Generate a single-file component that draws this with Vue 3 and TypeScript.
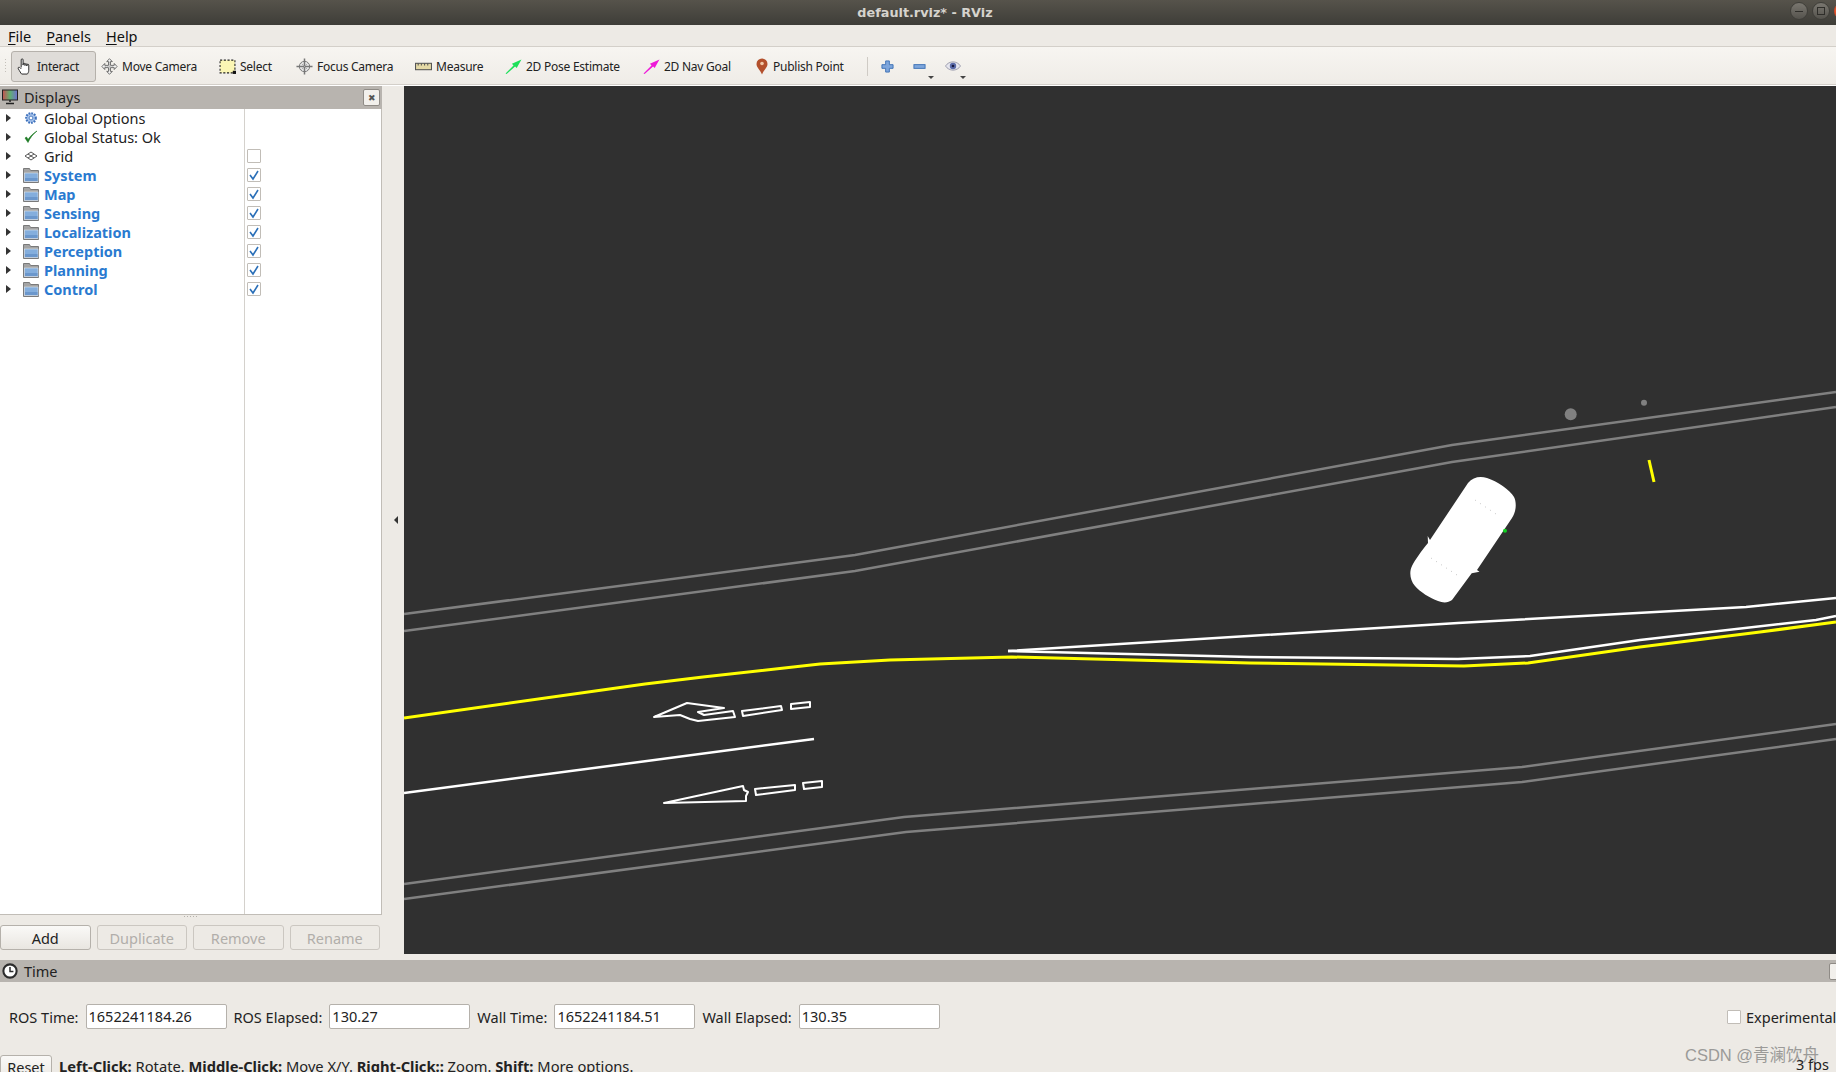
<script setup lang="ts">
const rows = [
  { name: 'Global Options', icon: 'gear', group: false, check: null },
  { name: 'Global Status: Ok', icon: 'ok', group: false, check: null },
  { name: 'Grid', icon: 'grid', group: false, check: false },
  { name: 'System', icon: 'folder', group: true, check: true },
  { name: 'Map', icon: 'folder', group: true, check: true },
  { name: 'Sensing', icon: 'folder', group: true, check: true },
  { name: 'Localization', icon: 'folder', group: true, check: true },
  { name: 'Perception', icon: 'folder', group: true, check: true },
  { name: 'Planning', icon: 'folder', group: true, check: true },
  { name: 'Control', icon: 'folder', group: true, check: true }
]

const timeFields = [
  { label: 'ROS Time:', value: '1652241184.26' },
  { label: 'ROS Elapsed:', value: '130.27' },
  { label: 'Wall Time:', value: '1652241184.51' },
  { label: 'Wall Elapsed:', value: '130.35' }
]
</script>

<template>
  <div class="window">
    <header class="titlebar">
      <span class="title">default.rviz* - RViz</span>
      <div class="win-buttons">
        <span class="win-btn"><i class="win-min"></i></span>
        <span class="win-btn"><i class="win-max"></i></span>
        <span class="win-btn win-close"></span>
      </div>
    </header>

    <nav class="menubar">
      <span class="menu-item"><u>F</u>ile</span>
      <span class="menu-item"><u>P</u>anels</span>
      <span class="menu-item"><u>H</u>elp</span>
    </nav>

    <div class="toolbar">
      <span class="grip"></span>
      <button class="tool tool-active" style="width: 85px">
        <svg class="ticon" viewBox="0 0 16 18"><path d="M4.500 10V2c0-1.500 2-1.500 2 0v5.500-1c0-1.300 2-1.300 2 0v1.500-1c0-1.300 2-1.300 2 0v1.500-1c0-1.300 2-1.300 2 0V13c0 2-.8 3-1.500 4H5c-1-1-2-3-3.500-5.500C.5 9.800 2.500 8.800 4.500 11.500" fill="#fff" stroke="#222" stroke-width="1"/></svg>
        Interact
      </button>
      <button class="tool" style="width: 118px">
        <svg class="ticon" viewBox="0 0 18 18"><path d="M9 .8l3 3h-2v4h4v-2l3 3.200-3 3.200v-2h-4v4h2l-3 3-3-3h2v-4H4v2L1 9l3-3.200v2h4v-4H6z" fill="#f4f4f4" stroke="#666" stroke-width="1"/><path d="M9 4v10M4 9h10" stroke="#aaa" stroke-width="1" stroke-dasharray="1 1"/></svg>
        Move Camera
      </button>
      <button class="tool" style="width: 77px">
        <svg class="ticon" viewBox="0 0 16 16"><rect x="1" y="2" width="14" height="12" fill="#fbf6b4" stroke="#222" stroke-dasharray="2 1.500"/><rect x="13" y="12" width="3" height="3" fill="#111"/></svg>
        Select
      </button>
      <button class="tool" style="width: 119px">
        <svg class="ticon" viewBox="0 0 18 18"><circle cx="9" cy="9" r="5.500" fill="#e8e8e8" stroke="#777"/><path d="M9 .5v17M.5 9h17" stroke="#777" stroke-width="1.600"/><path d="M6 6l6 6M12 6l-6 6" stroke="#aaa"/></svg>
        Focus Camera
      </button>
      <button class="tool" style="width: 90px">
        <svg class="ticon" viewBox="0 0 16 16"><rect x="0.500" y="5" width="15" height="6" fill="#e4d9a6" stroke="#555"/><path d="M3 5v2M6 5v2M9 5v2M12 5v2" stroke="#555"/></svg>
        Measure
      </button>
      <button class="tool" style="width: 138px">
        <svg class="ticon arrow-icon" viewBox="0 0 16 14"><path d="M.5 13.500L8 6 6.500 4.500 15.500.5 11 8.500 9.500 7 1.500 14z" fill="#1ee05a"/></svg>
        2D Pose Estimate
      </button>
      <button class="tool" style="width: 110px">
        <svg class="ticon arrow-icon" viewBox="0 0 16 14"><path d="M.5 13.500L8 6 6.500 4.500 15.500.5 11 8.500 9.500 7 1.500 14z" fill="#ee18d8"/></svg>
        2D Nav Goal
      </button>
      <button class="tool tool-pin" style="width: 112px">
        <svg class="ticon pin" viewBox="0 0 12 16"><path d="M6 16C4 11 .5 9 .5 5.500a5.500 5.500 0 0 1 11 0C11.500 9 8 11 6 16z" fill="#b3502c"/><circle cx="6" cy="5" r="1.800" fill="#f0c8a8"/></svg>
        Publish Point
      </button>
      <span class="tool-sep"></span>
      <span class="view-btn">
        <svg class="vicon" viewBox="0 0 14 14"><path d="M5 1h4v4h4v4H9v4H5V9H1V5h4z" fill="#7ea6dc" stroke="#3c70b4"/></svg>
      </span>
      <span class="view-btn">
        <svg class="vicon" viewBox="0 0 14 14"><rect x="1" y="5" width="12" height="4" fill="#7ea6dc" stroke="#3c70b4"/></svg>
        <i class="drop"></i>
      </span>
      <span class="view-btn">
        <svg class="vicon eye" viewBox="0 0 16 12"><path d="M.5 6C4 .5 12 .5 15.500 6 12 11.500 4 11.500 .5 6z" fill="#e6e6ee" stroke="#a0a0b0"/><circle cx="8" cy="6" r="3.200" fill="#5a6aa8"/><circle cx="8" cy="6" r="1.300" fill="#1a1a40"/></svg>
        <i class="drop"></i>
      </span>
    </div>

    <main class="workspace">
      <aside class="side">
        <div class="dock-title displays-title">
          <svg class="monitor" viewBox="0 0 16 16">
            <defs>
              <linearGradient id="screen" x1="0" x2="1" y1="0" y2="0">
                <stop offset="0" stop-color="#c85050"/>
                <stop offset="0.500" stop-color="#60b070"/>
                <stop offset="1" stop-color="#7070d0"/>
              </linearGradient>
            </defs>
            <rect x="0.500" y="1" width="15" height="10" fill="url(#screen)" stroke="#222"/>
            <path d="M8 11v2M4 14.500h8" stroke="#222" stroke-width="1.500"/>
          </svg>
          <span>Displays</span>
          <span class="dock-close">✖</span>
        </div>

        <div class="tree">
          <div class="tree-rows">
            <div v-for="row in rows" :key="row.name" class="tree-row">
              <span class="arrow"></span>
              <span class="row-icon">
                <svg v-if="row.icon === 'gear'" viewBox="0 0 16 16" width="14" height="14">
                  <circle cx="8" cy="8" r="5.500" fill="#a8c4ec" stroke="#3f72bc" stroke-width="2.400" stroke-dasharray="2 1.200"/>
                  <circle cx="8" cy="8" r="2.200" fill="#fff" stroke="#3f72bc"/>
                </svg>
                <svg v-else-if="row.icon === 'ok'" viewBox="0 0 14 14" width="14" height="14">
                  <path d="M1 8l3 4.500C6 8 9 4 13 1 9 3.500 6 6.500 4 9.500L2.500 7z" fill="#1c7a24" stroke="#1c7a24" stroke-width="0.600"/>
                </svg>
                <svg v-else-if="row.icon === 'grid'" viewBox="0 0 14 10" width="14" height="10">
                  <path d="M7 1l6 4-6 4-6-4zM4 3l6 4M10 3L4 7" fill="#fff" stroke="#555" stroke-width="1"/>
                </svg>
                <svg v-else viewBox="0 0 16 16" width="16" height="16">
                  <path d="M.5 15.500V1.500h6l1 2h8v12z" fill="#a4a4a4" stroke="#7a7a7a"/>
                  <rect x="1.500" y="6" width="13.500" height="8.500" fill="#84aedd" stroke="#dfe6ee" stroke-width="0.600"/>
                  <rect x="2" y="11" width="12.500" height="3" fill="#6b97cc"/>
                </svg>
              </span>
              <span class="row-name" :class="{ 'row-group': row.group }">{{ row.name }}</span>
              <span v-if="row.check !== null" class="cell-check">
                <span class="check">
                  <svg v-if="row.check" viewBox="0 0 12 12" width="12" height="12">
                    <path d="M2 6l3 4 5-8" fill="none" stroke="#2a6fb8" stroke-width="1.600"/>
                  </svg>
                </span>
              </span>
            </div>
          </div>
          <span class="col-line"></span>
        </div>

        <div class="dots"><i class="dot-row"></i></div>

        <div class="side-buttons">
          <button class="btn">Add</button>
          <button class="btn" disabled>Duplicate</button>
          <button class="btn" disabled>Remove</button>
          <button class="btn" disabled>Rename</button>
        </div>
      </aside>

      <div class="splitter"><i class="split-arrow"></i></div>

      <section class="viewport">
        <svg class="scene" viewBox="404 86 1432 868" width="1432" height="868">
          <g fill="none" stroke="#808080" stroke-width="2.500">
            <polyline points="404,614 855,555 1452,445 1836,392"/>
            <polyline points="404,631 855,571 1452,462 1836,407"/>
            <polyline points="404,884 904,817 1522,767 1836,724"/>
            <polyline points="404,899 906,832 1522,782 1836,739"/>
          </g>
          <polyline fill="none" stroke="#ffff00" stroke-width="3" points="404,718 645,684 703,677 820,664 890,660 1012,657 1250,663 1464,666 1528,663 1640,647 1760,632 1836,622"/>
          <g fill="none" stroke="#fff" stroke-width="2.500" stroke-linejoin="round">
            <polyline points="404,793 814,739"/>
            <polyline points="1008,651 1458,623 1746,607 1836,598"/>
            <polyline points="1008,651 1250,657 1458,659 1530,656 1640,640 1816,620 1836,616"/>
          </g>
          <g fill="none" stroke="#fff" stroke-width="2" stroke-linejoin="round">
            <path d="M654,717 L687,703 L724,708 L698,712 L704,715 L733,711 L735,717 L698,721 L690,719 L680,715 Z"/>
            <path d="M742,711 L781,706 L782,710 L743,716 Z"/>
            <path d="M791,704 L810,702 L810,707 L791,709 Z"/>
            <path d="M664,803 L743,786 L744,790 L748,792 L746,796 L746,801 Z"/>
            <path d="M755,789 L795,785 L795,790 L756,795 Z"/>
            <path d="M803,783 L822,781 L822,787 L804,789 Z"/>
          </g>
          <path fill="#fff" d="M1468,483 C1473,477 1480,476 1487,478 C1497,481 1510,490 1514,497 C1517,503 1516,512 1512,518 L1477,570 L1479.500,571.700 L1471.700,573.300 L1452,600 C1448,603 1443,603 1438,601 C1430,598 1420,592 1415,586 C1410,580 1409,572 1412,566 C1415,560 1422,550 1428,543 L1427.700,536 L1430,540 Z"/>
          <path d="M1475,500 L1496,514 M1431,558 L1457,575" stroke="#c4c4c4" stroke-width="1" stroke-dasharray="1 5"/>
          <path stroke="#ffff00" stroke-width="3" d="M1649,460 L1654,482"/>
          <circle cx="1570.700" cy="414.300" r="6" fill="#808080"/>
          <circle cx="1644" cy="402.700" r="3" fill="#808080"/>
          <circle cx="1505" cy="530.700" r="2" fill="#10d020"/>
        </svg>
      </section>
    </main>

    <section class="time-panel">
      <div class="dock-title time-title">
        <svg class="clock" viewBox="0 0 14 14"><circle cx="7" cy="7" r="5.800" fill="#fff" stroke="#2c2c2c" stroke-width="1.800"/><path d="M7 3.500V7.500H10" fill="none" stroke="#2c2c2c" stroke-width="1.300"/></svg>
        <span>Time</span>
        <span class="time-float"></span>
      </div>
      <div class="time-fields">
        <template v-for="field in timeFields" :key="field.label">
          <label class="time-label">{{ field.label }}</label>
          <span class="time-input">{{ field.value }}</span>
        </template>
        <span class="experimental">
          <span class="check exp-check"></span>
          Experimental
        </span>
      </div>
      <div class="status-line">
        <button class="btn reset">Reset</button>
        <span class="hint"><b>Left-Click:</b> Rotate. <b>Middle-Click:</b> Move X/Y. <b>Right-Click::</b> Zoom. <b>Shift:</b> More options.</span>
      </div>
      <span class="watermark">CSDN @青澜饮舟</span>
      <span class="fps">3 fps</span>
    </section>
  </div>
</template>

<style>
html, body { margin: 0; background: #edeae5; overflow: hidden; }
</style>

<style scoped>
.window {
  width: 1836px;
  height: 1072px;
  display: flex;
  flex-direction: column;
  overflow: hidden;
  background: #edeae5;
  color: #111;
  font-family: "Noto Sans", "Noto Sans CJK SC", sans-serif;
  font-size: 14px;
}

.titlebar {
  height: 25px;
  flex: none;
  position: relative;
  display: flex;
  align-items: center;
  justify-content: center;
  padding-left: 14px;
  box-sizing: border-box;
  background: linear-gradient(#56534b, #3e3d38);
}
.title {
  color: #d6d3cd;
  font-family: "DejaVu Sans", sans-serif;
  font-size: 12.800px;
  font-weight: 700;
}
.win-buttons {
  position: absolute;
  top: 2px;
  left: 1790px;
  display: flex;
  gap: 4px;
}
.win-btn {
  width: 16px;
  height: 16px;
  border-radius: 50%;
  background: linear-gradient(#7a7770, #55534d);
  border: 1px solid #3f3e39;
  display: flex;
  align-items: center;
  justify-content: center;
  flex: none;
}
.win-close { background: #e9572c; border-color: #c9492a; }
.win-min { width: 8px; height: 1px; background: #2f2e2a; }
.win-max { width: 6px; height: 6px; border: 1px solid #2f2e2a; }

.menubar {
  height: 21px;
  flex: none;
  display: flex;
  align-items: center;
  padding-left: 8px;
  gap: 15px;
  background: #edeae5;
  border-bottom: 1px solid #d3cfc9;
  font-size: 14.500px;
}
.menu-item u { text-underline-offset: 2px; }

.toolbar {
  height: 36px;
  padding-top: 1px;
  flex: none;
  display: flex;
  align-items: center;
  padding-left: 11px;
  position: relative;
  background: linear-gradient(#f7f5f1, #efece7);
  border-bottom: 1px solid #d3cfc9;
  margin-bottom: 1px;
  box-shadow: 0 1px 0 #fff;
  font-size: 12px;
  letter-spacing: -0.250px;
}
.grip {
  position: absolute;
  left: 4px;
  top: 11px;
  width: 3px;
  height: 16px;
  background-image: radial-gradient(#c4c0ba 0.700px, transparent 0.800px);
  background-size: 3px 3px;
}
.tool {
  height: 31px;
  flex: none;
  display: flex;
  align-items: center;
  gap: 4px;
  padding: 0 0 0 4px;
  margin: 0;
  border: 1px solid transparent;
  border-radius: 3px;
  background: none;
  color: #222;
  font: inherit;
  letter-spacing: inherit;
}
.tool-pin { padding-left: 7px; }
.tool-active {
  background: #dfdcd8;
  border-color: #b5b1ab;
}
.ticon { width: 17px; height: 17px; flex: none; }
.arrow-icon { height: 15px; }
.pin { width: 12px; margin-right: 1px; }
.tool-sep {
  width: 1px;
  height: 19px;
  margin: 0 0 0 7px;
  background: #cfcbc5;
}
.view-btn {
  position: relative;
  width: 32px;
  height: 20px;
  display: flex;
  align-items: center;
  padding-left: 13px;
  box-sizing: content-box;
  margin-right: -13px;
}
.vicon { width: 13px; height: 13px; }
.eye { width: 16px; height: 12px; }
.drop {
  position: absolute;
  left: 28px;
  bottom: -3px;
  border: 3px solid transparent;
  border-top: 3px solid #444;
  border-bottom: 0;
}

.workspace {
  height: 868px;
  flex: none;
  display: flex;
}

.side {
  width: 382px;
  flex: none;
  display: flex;
  flex-direction: column;
}
.dock-title {
  height: 23px;
  flex: none;
  display: flex;
  align-items: center;
  position: relative;
  padding-left: 2px;
  background: #b8b4af;
  font-size: 14.500px;
  color: #222;
}
.displays-title {
  box-sizing: border-box;
  padding-bottom: 2px;
}
.monitor { width: 16px; height: 16px; margin-right: 6px; }
.dock-close {
  position: absolute;
  right: 2px;
  top: 3px;
  width: 15px;
  height: 15px;
  border: 1px solid #8f8b86;
  border-radius: 2px;
  background: #f2f0ec;
  color: #555;
  font-size: 9px;
  display: flex;
  align-items: center;
  justify-content: center;
}

.tree {
  position: relative;
  flex: 1;
  background: #fff;
  border-right: 1px solid #c1bdb7;
  border-bottom: 1px solid #c1bdb7;
}
.tree-rows { margin-top: -1px; }
.col-line {
  position: absolute;
  left: 244px;
  top: 0;
  bottom: 0;
  width: 1px;
  background: #d4d1cc;
}
.tree-row {
  height: 19px;
  display: flex;
  align-items: center;
  position: relative;
  font-size: 14.500px;
  color: #222;
}
.arrow {
  margin-left: 6px;
  width: 0;
  height: 0;
  border-left: 5px solid #333;
  border-top: 4.500px solid transparent;
  border-bottom: 4.500px solid transparent;
}
.row-icon {
  width: 17px;
  margin-left: 11px;
  margin-right: 5px;
  display: flex;
  align-items: center;
  justify-content: center;
}
.row-group { font-weight: 700; color: #2a7ad0; }
.cell-check {
  position: absolute;
  left: 247px;
  top: 3px;
}
.check {
  width: 12px;
  height: 12px;
  display: flex;
  align-items: center;
  justify-content: center;
  background: #fff;
  border: 1px solid #c1bdb7;
  border-radius: 1px;
}
.dots {
  height: 10px;
  flex: none;
  display: flex;
  justify-content: center;
}
.dot-row {
  width: 16px;
  height: 1px;
  margin-top: 1px;
  background-image: radial-gradient(#b5b1ab 0.600px, transparent 0.700px);
  background-size: 3px 1px;
}
.side-buttons {
  height: 25px;
  flex: none;
  display: flex;
  gap: 6px;
  margin-bottom: 4px;
}
.btn {
  width: 90.500px;
  height: 25px;
  padding: 0;
  border: 1px solid #b5b1ab;
  border-radius: 3px;
  background: linear-gradient(#faf9f7, #e9e6e1);
  color: #222;
  font-family: inherit;
  font-size: 14.500px;
}
.btn:disabled {
  color: #b1aeaa;
  background: #edeae5;
  border-color: #cbc7c1;
}

.splitter {
  width: 22px;
  flex: none;
  display: flex;
  align-items: center;
  justify-content: center;
  padding-left: 6px;
  box-sizing: border-box;
}
.split-arrow {
  border-right: 4px solid #333;
  border-top: 4px solid transparent;
  border-bottom: 4px solid transparent;
}

.viewport {
  flex: 1;
  background: #303030;
  overflow: hidden;
}
.scene { display: block; }

.time-panel {
  position: relative;
  margin-top: 6px;
  flex: 1;
}
.time-title { height: 22px; }
.clock { width: 16px; height: 16px; margin-right: 6px; }
.time-float {
  position: absolute;
  right: -6px;
  top: 3px;
  width: 11px;
  height: 15px;
  border: 1px solid #8f8b86;
  border-radius: 2px;
  background: #f2f0ec;
}
.time-fields {
  height: 25px;
  margin-top: 22px;
  padding-left: 9px;
  display: flex;
  align-items: center;
  font-size: 14.500px;
  color: #222;
}
.time-label { margin-right: 7px; white-space: nowrap; }
.time-input {
  width: 141px;
  height: 25px;
  flex: none;
  box-sizing: border-box;
  margin-right: 7px;
  padding-left: 2px;
  background: #fff;
  border: 1px solid #b5b1ab;
  border-radius: 2px;
  line-height: 23px;
}
.experimental {
  position: absolute;
  left: 1727px;
  display: flex;
  align-items: center;
  gap: 5px;
}
.exp-check { width: 12px; height: 12px; }

.status-line {
  margin-top: 26px;
  display: flex;
  align-items: flex-start;
  font-size: 14.700px;
  color: #222;
}
.reset {
  width: 52px;
  height: 30px;
  padding-bottom: 6px;
  flex: none;
}
.hint {
  margin-left: 7px;
  line-height: 23px;
  white-space: nowrap;
}
.fps {
  position: absolute;
  left: 1796px;
  top: 94px;
  line-height: 20px;
  font-size: 14.500px;
  color: #222;
}
.watermark {
  position: absolute;
  left: 1685px;
  top: 82px;
  color: #9b9a98;
  font-family: "Liberation Sans", "Noto Sans CJK SC", sans-serif;
  font-size: 16.500px;
  white-space: nowrap;
}
</style>
